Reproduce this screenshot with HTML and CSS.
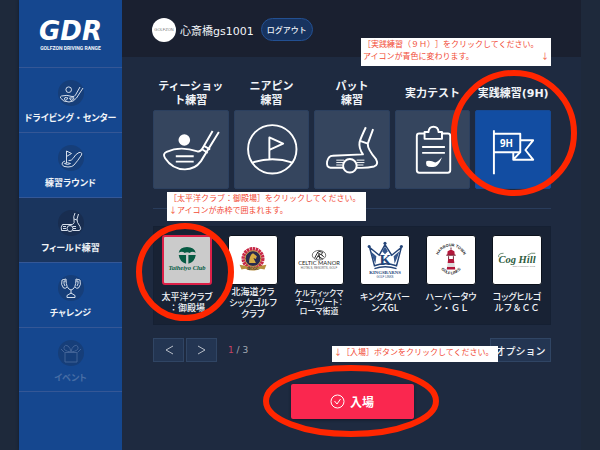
FILE: index.html
```html
<!DOCTYPE html>
<html lang="ja">
<head>
<meta charset="utf-8">
<title>GDR - GOLFZON DRIVING RANGE</title>
<link rel="stylesheet" href="styles.css">
</head>
<body>
<div class="app">
  <nav class="sidebar">
    <div class="brand">
      <span class="brand-name">GDR</span>
      <span class="brand-sub">GOLFZON DRIVING RANGE</span>
    </div>
    <a class="nav-item" href="#center">
      <svg class="nav-icon" viewBox="0 0 26 26"><circle class="disc" cx="13" cy="13" r="13"/><circle cx="10.700" cy="9.700" r="2.800"/><path d="M22 7L17.500 15Q16.500 17 14 16.500Q9 14.500 3.500 16Q2 16.500 2.500 18Q5 22 11 22Q15.500 22 18.500 18L25 8M7 17.500Q5 19.500 8 20.500L10 18ZM11.500 18L13 20.500Q16.500 19.500 16 17.800Z"/></svg>
      <span>ドライビング<span class="full">・</span>センター</span>
    </a>
    <a class="nav-item" href="#round">
      <svg class="nav-icon" viewBox="0 0 26 26"><circle class="disc" cx="13" cy="13" r="13"/><path d="M8.500 18V6L13.500 8.500L8.500 11.500M7 16Q3.500 17 4 19.500Q5 22 10 22Q14.500 22 16 20Q20 15.500 23.500 10Q24.500 7 21 7.500Q17.500 9 15 13.500Q13.500 16 10.500 15.500M6.500 18.500Q9.500 17 12.500 18.500Q9.500 20.500 6.500 18.500Z"/></svg>
      <span>練習ラウンド</span>
    </a>
    <a class="nav-item is-active" href="#field" aria-current="page">
      <svg class="nav-icon" viewBox="0 0 26 26"><circle class="disc" cx="13" cy="13" r="13"/><path d="M17 3Q15 7 16 10Q17 13 14.500 14.500H4.500Q2.500 17 3.500 20.500H9M15 20.500H21.500Q23.500 19 22 16.500Q18.500 12 19 9L20.500 4M16 9L19 10M5 16.500H8M5 18.500H8M15 16.500H18M15 18.500H18"/><circle cx="12" cy="18.500" r="3"/></svg>
      <span>フィールド練習</span>
    </a>
    <a class="nav-item" href="#challenge">
      <svg class="nav-icon" viewBox="0 0 26 26"><circle class="disc" cx="13" cy="13" r="13"/><path d="M8 4Q8 14 13 15Q18 14 18 4L22 5Q23.500 10 20.500 13Q18.500 14 17 12M8 4L4 5Q2.500 10 5.500 13Q7.500 14 9 12M8 6H6Q5.500 9 7 11M18 6H20Q20.500 9 19 11M13 15V19M13 18L9 20.500V22.500H17V20.500Z"/></svg>
      <span>チャレンジ</span>
    </a>
    <a class="nav-item is-disabled" href="#event" aria-disabled="true">
      <svg class="nav-icon" viewBox="0 0 26 26"><circle class="disc" cx="13" cy="13" r="13"/><path d="M7 12.500H19V22H7ZM3 9L6.500 12.500M23 9L19.500 12.500M13 12Q5 11 6 7Q7 4 10 6Q12.500 8 13 12Q13.500 8 16 6Q19 4 20 7Q21 11 13 12Z"/></svg>
      <span>イベント</span>
    </a>
  </nav>

  <main class="main">
    <header class="topbar">
      <span class="avatar">GOLFZON</span>
      <span class="user">心斎橋gs1001</span>
      <button class="logout" type="button">ログアウト</button>
    </header>

    <div class="content">
      <section class="modes">
        <button class="mode" type="button">
          <span class="mode-label"><span>ティーショッ<br>ト練習</span></span>
          <svg class="mode-icon" viewBox="0 0 76 79"><circle class="solid" cx="31.300" cy="29.700" r="6"/><path d="M60.500 20.500L50 38.500Q48 42 45 41.500Q27 35.500 13 42Q8.500 44 11.500 48.500Q19 60 32 60Q42.500 60 48.500 51.500L67 21.500M52 36L58 39.500M50 39.500L55.500 43M22.500 46.500H41M22.500 52H41"/></svg>
        </button>
        <button class="mode" type="button">
          <span class="mode-label"><span>ニアピン<br>練習</span></span>
          <svg class="mode-icon" viewBox="0 0 76 79"><circle cx="38.500" cy="39.300" r="25"/><path d="M35.500 50V27L49.700 33.500L35.500 40M18 53Q38.500 46 59.500 53"/></svg>
        </button>
        <button class="mode" type="button">
          <span class="mode-label"><span>パット<br>練習</span></span>
          <svg class="mode-icon" viewBox="0 0 76 79"><path d="M52.500 16.500Q47 28 46 32Q45 38 49.500 44.500L18 46Q14 46 12.500 52Q11.500 58 16 58.300H29M43 58.300Q53 59 61 57Q66 55 63 49.500Q54 39 54.500 33.500L60 18.500M46.500 30.500L54.500 33.500"/><path class="thin" d="M22 50.500H30M22 53H29M22 55.500H28M43 50.500H51M43 53H51M43 55.500H50"/><circle cx="36" cy="56.300" r="7"/></svg>
        </button>
        <button class="mode" type="button">
          <span class="mode-label"><span>実力テスト</span></span>
          <svg class="mode-icon" viewBox="0 0 76 79"><path d="M29.500 23H24Q21.500 23 21.500 25.500V61Q21.500 63.500 24 63.500H53.500Q56 63.500 56 61V25.500Q56 23 53.500 23H48M29.500 21.500H33.500Q34 16 38.700 16Q43.500 16 44 21.500H47.500V28.500H29.500ZM27 37H50.500M27 43H50.500"/><path class="solid" d="M31.500 51.500Q36 50.500 40.500 53Q43 52.500 47.500 47.500Q44.500 55.500 41 57Q34 58.500 31.500 56Q30.500 53.500 31.500 51.500Z"/></svg>
        </button>
        <button class="mode is-selected" type="button" aria-pressed="true">
          <span class="mode-label"><span>実践練習(9H)</span></span>
          <svg class="mode-icon" viewBox="0 0 76 79"><path d="M18.500 19.500V65M18.500 23.300H45.700V42.300H18.500M45.700 30H59L51 40L59 50H38.500V42.300M38.500 50L45.700 42.300"/><text class="flag-text" x="31.500" y="37">9H</text></svg>
          <svg class="ring ring-mode" viewBox="0 0 126 126" aria-hidden="true"><circle cx="63" cy="63" r="60"/></svg>
        </button>
        <p class="note note-mode"><span>［実践練習（９Ｈ）］をクリックしてください。</span><span class="note-row"><span>アイコンが青色に変わります。</span><span>↓</span></span></p>
      </section>

      <section class="courses">
        <p class="note note-course"><span>［太平洋クラブ：御殿場］をクリックしてください。</span><span>↓アイコンが赤枠で囲まれます。</span></p>
        <button class="course is-selected" type="button" aria-pressed="true">
          <svg class="course-logo" viewBox="0 0 50 50"><g fill="#075b43"><path d="M16 17Q17 11.500 25 11Q33 11.500 34.500 17Q30 15 28 17.500Q25 15.500 22.500 17.500Q20 15 16 17Z"/><path d="M16 19.500H24V29Q17 27 16 19.500ZM26.500 19.500H34.500Q33.500 27 26.500 29Z"/></g><text class="logo-taiheiyo" x="25" y="36">Taiheiyo Club</text></svg>
          <span class="caption">太平洋クラブ<br><span class="full">：御殿場</span></span>
          <svg class="ring ring-course" viewBox="0 0 98 98" aria-hidden="true"><circle cx="49" cy="49" r="46"/></svg>
        </button>
        <button class="course" type="button">
          <svg class="course-logo" viewBox="0 0 50 50"><circle cx="25" cy="23.500" r="10" fill="#e6b6b8" stroke="#c72745" stroke-width="4" stroke-dasharray="2.500 .6"/><circle cx="25" cy="23.500" r="8.200" fill="#292a4d" stroke="#c9a24a"/><path d="M21 28Q21 20 25 18L29 21L28 24L25.500 23L28 28Z" fill="#d8ad42"/><path d="M11 30L17 31Q25 34 33 31L39 30L37 35L33 34Q25 38 17 34L13 35Z" fill="#b98f3e"/><text class="logo-hcgc" x="25" y="35.500">HCGC</text></svg>
          <span class="caption">北海道クラ<br>シックゴルフ<br>クラブ</span>
        </button>
        <button class="course" type="button">
          <svg class="course-logo" viewBox="0 0 50 50"><ellipse cx="25" cy="20" rx="7" ry="5" fill="none" stroke="#444" stroke-width=".8"/><path d="M20.500 23L23 18L25 16L29 17L27.500 19L30 22M22 24L25 19L26 24M24 21L29 24M23 17L28 20" fill="none" stroke="#222" stroke-width="1"/><text class="logo-celtic" x="25" y="30.500">CELTIC MANOR</text><text class="logo-tiny" x="25" y="34">HOTELS, RESORTS, GOLF</text></svg>
          <span class="caption is-small">ケルティックマ<br>ナーリゾート：<br>ローマ街道</span>
        </button>
        <button class="course" type="button">
          <svg class="course-logo" viewBox="0 0 50 50"><path d="M9 12L14 31Q25 27 37 31L42 12L32 20L25 9L19 20ZM14 34Q25 30 37 34" fill="none" stroke="#244477" stroke-width="1.500"/><path d="M10 16L16 21L15 29L12 22ZM40 16L34 21L35 29L38 22ZM22 16L25 11L28 16L25 19Z" fill="#35578c"/><g fill="#244477"><circle cx="8.500" cy="11" r="1.600"/><circle cx="25" cy="7.500" r="1.600"/><circle cx="42" cy="11" r="1.600"/></g><text class="logo-k" x="25.500" y="30">K</text><text class="logo-kings" x="25" y="40">KINGSBARNS</text><text class="logo-tiny logo-blue" x="25" y="44">GOLF LINKS</text></svg>
          <span class="caption">キングスバー<br>ンズGL</span>
        </button>
        <button class="course" type="button">
          <svg class="course-logo" viewBox="0 0 50 50"><defs><path id="arc-top" d="M11.500 21A14 14 0 0 1 38.500 21"/><path id="arc-low" d="M14 34Q25 46 36 34"/></defs><text class="logo-arc"><textPath href="#arc-top" startOffset="50%">HARBOUR TOWN</textPath></text><text class="logo-arc"><textPath href="#arc-low" startOffset="50%">GOLF LINKS</textPath></text><path d="M21 20L21.500 16L25 14L28.500 16L29 20ZM22 24H28L28.500 28H21.500ZM21 32H29L29.500 35H20.500Z" fill="#b2173b"/><path d="M20 20H30M22.500 21V24M27.500 21V24M25 12V14" stroke="#6e1d31" fill="none"/><path d="M21.500 28H28.500L29 32H21Z" fill="#ddd"/></svg>
          <span class="caption">ハーバータウ<br><span class="full">ン・ＧＬ</span></span>
        </button>
        <button class="course" type="button">
          <svg class="course-logo" viewBox="0 0 50 50"><text class="logo-cog" x="25" y="28">Cog Hill</text><path d="M6 22Q5 18 11 18M36 20Q40 17 44 18" fill="none" stroke="#2d5c3d" stroke-width=".7"/><text class="logo-mini" x="32" y="32">GOLF &amp; COUNTRY CLUB</text></svg>
          <span class="caption">コッグヒルゴ<br><span class="full">ルフ＆ＣＣ</span></span>
        </button>
      </section>

      <div class="pager">
        <button class="page-button" type="button" aria-label="前へ"><svg viewBox="0 0 10 10"><path d="M9 1L2 5L9 9"/></svg></button>
        <button class="page-button" type="button" aria-label="次へ"><svg viewBox="0 0 10 10"><path d="M1 1L8 5L1 9"/></svg></button>
        <span class="page-count"><b>1</b> / 3</span>
        <button class="option" type="button">オプション</button>
        <p class="note note-enter"><span>↓［入場］ボタンをクリックしてください。</span></p>
      </div>

      <div class="actions">
        <button class="enter" type="button">
          <svg class="check" viewBox="0 0 15 15"><circle cx="7.500" cy="7.500" r="6.500"/><path d="M4.500 7L7 10L10.500 5"/></svg>
          <span>入場</span>
          <svg class="ring ring-enter" viewBox="0 0 176 72" aria-hidden="true"><ellipse cx="88" cy="36" rx="85" ry="33"/></svg>
        </button>
      </div>
    </div>
  </main>
</div>
</body>
</html>
```
FILE: styles.css
```css
* { box-sizing: border-box; }

body {
  margin: 0;
  background: #1e293b;
  color: #f1f4f8;
  font-family: "DejaVu Sans", "Noto Sans CJK JP", sans-serif;
}

button {
  margin: 0;
  padding: 0;
  border: 0;
  background: none;
  color: inherit;
  font: inherit;
  cursor: pointer;
}

p { margin: 0; }

.app {
  display: flex;
  min-height: 100vh;
  padding: 0 19px;
}

/* Sidebar */
.sidebar {
  flex: 0 0 103px;
  background: #15478f;
  box-shadow: 0 0 3px #10192a;
}

.brand {
  display: flex;
  flex-direction: column;
  align-items: center;
  height: 67px;
  padding-top: 17px;
}

.brand-name {
  font-size: 26px;
  font-style: italic;
  font-weight: bold;
  line-height: 28px;
  color: #fff;
}

.brand-sub {
  font-family: Roboto, sans-serif;
  font-size: 5px;
  font-weight: 700;
  line-height: 6px;
  white-space: nowrap;
}

.nav-item {
  display: flex;
  flex-direction: column;
  align-items: center;
  gap: 6px;
  height: 65px;
  padding-top: 12px;
  border-top: 1px solid #345796;
  color: #f1f4f8;
  font-family: "Noto Sans CJK JP", sans-serif;
  font-size: 9px;
  font-weight: 700;
  font-feature-settings: "palt";
  line-height: 12px;
  text-decoration: none;
  white-space: nowrap;
}

.nav-item:last-child {
  border-bottom: 1px solid #345796;
}

.nav-item.is-active { background: #1a355e; }

.nav-item.is-disabled { color: #476da5; }

.nav-icon {
  width: 26px;
  height: 26px;
  fill: none;
  stroke: #d5deeb;
  stroke-width: 1;
  stroke-linejoin: round;
}

.nav-icon .disc {
  fill: #163e79;
  stroke: none;
}

.is-active .disc { fill: #182d50; }

.is-disabled .nav-icon,
.nav-item.is-disabled .nav-icon { stroke: #416296; }

.full {
  font-feature-settings: normal;
  text-spacing-trim: space-all;
}

/* Top bar */
.main {
  flex: 1;
  min-width: 0;
  background: #1e2a40;
}

.topbar {
  display: flex;
  align-items: center;
  height: 57px;
  padding: 2px 30px 0;
  background: #1a2030;
}

.avatar {
  display: flex;
  align-items: center;
  justify-content: center;
  width: 24px;
  height: 24px;
  border-radius: 50%;
  background: #fff;
  color: #777;
  font-family: "Liberation Sans", sans-serif;
  font-size: 4px;
}

.user {
  margin-left: 4px;
  font-size: 11px;
}

.logout {
  width: 52px;
  height: 23px;
  margin-left: 7px;
  border: 1px solid #235092;
  border-radius: 12px;
  background: #17335f;
  font-size: 8px;
  font-weight: 500;
}

.content { padding: 22px 30px 0 31px; }

/* Practice modes */
.modes {
  position: relative;
  display: grid;
  grid-template-columns: repeat(5, minmax(0, 1fr));
  gap: 5px;
  padding-bottom: 19px;
  border-bottom: 1px solid #293c5b;
}

.mode {
  position: relative;
  display: flex;
  flex-direction: column;
  gap: 2px;
  font-size: 11px;
  font-weight: bold;
  line-height: 14px;
}

.mode-label {
  display: flex;
  align-items: center;
  justify-content: center;
  width: 100%;
  height: 29px;
  text-align: center;
  white-space: nowrap;
}

.mode-icon {
  width: 100%;
  height: 79px;
  border: 1px solid #2c405f;
  border-radius: 2px;
  background: #35455e;
  fill: none;
  stroke: #fff;
  stroke-width: 2;
  stroke-linejoin: round;
}

.mode-icon .solid { fill: #fff; stroke: none; }

.mode-icon .thin { stroke-width: 1; }

.mode.is-selected .mode-icon {
  border-color: #164994;
  background: #124da2;
}

.flag-text {
  fill: #fff;
  stroke: none;
  font-family: "Noto Sans", sans-serif;
  font-size: 10px;
  text-anchor: middle;
}

/* Courses */
.courses {
  position: relative;
  display: grid;
  grid-template-columns: repeat(6, minmax(0, 1fr));
  height: 99px;
  margin-top: 17px;
  padding: 8px 0 0;
  border: 1px solid #152033;
  background: #182234;
}

.course {
  position: relative;
  display: flex;
  flex-direction: column;
  align-items: center;
}

.course-logo {
  width: 50px;
  height: 50px;
  flex: none;
  border: 1px solid #0c121c;
  border-radius: 3px;
  background: #fff;
}

.course.is-selected .course-logo {
  border: 2px solid #dc2048;
  background: #cbcbcb;
}

.caption {
  display: flow-root;
  height: 34px;
  padding-top: 6px;
  font-family: "Noto Sans CJK JP", sans-serif;
  font-size: 9px;
  font-weight: 500;
  font-feature-settings: "palt";
  line-height: 11px;
  text-align: center;
  white-space: nowrap;
}

.caption:has(br + br),
.caption:has(br ~ br) { padding-top: 1px; }

.caption.is-small {
  padding-top: 3px;
  font-size: 8px;
  line-height: 9px;
}

.course-logo text { text-anchor: middle; }

.logo-taiheiyo {
  fill: #075b43;
  font: italic bold 7px "Liberation Serif", serif;
}

.logo-hcgc { fill: #2b2630; font: bold 4px "Liberation Serif", serif; }

.logo-celtic { fill: #222; font: 6px Lato, sans-serif; }

.logo-tiny { fill: #555; font: 3px "Liberation Sans", sans-serif; }

.logo-mini { fill: #777; font: 2px "Liberation Sans", sans-serif; }

.logo-k { fill: #244477; font: bold 16px "Liberation Serif", serif; }

.logo-kings { fill: #244477; font: bold 5px "Liberation Serif", serif; }

.logo-blue { fill: #244477; }

.logo-arc { fill: #222; font: bold 4px "Liberation Sans", sans-serif; }

.logo-cog {
  fill: #2d5c3d;
  font: italic bold 11px "Liberation Serif", serif;
}

/* Pager */
.pager {
  position: relative;
  display: flex;
  align-items: center;
  gap: 2px;
  margin-top: 13px;
}

.page-button,
.option {
  display: flex;
  align-items: center;
  justify-content: center;
  width: 31px;
  height: 24px;
  border: 1px solid #304564;
  background: #233552;
}

.page-button svg {
  width: 10px;
  height: 10px;
  fill: none;
  stroke: #b8bec8;
}

.page-count {
  margin-left: 9px;
  color: #a5aab4;
  font-size: 9px;
}

.page-count b {
  color: #c54263;
  font-weight: normal;
}

.option {
  width: 61px;
  margin-left: auto;
  font-size: 10px;
  font-weight: 500;
}

/* Enter */
.actions {
  display: flex;
  justify-content: center;
  margin-top: 22px;
}

.enter {
  position: relative;
  display: flex;
  align-items: center;
  justify-content: center;
  gap: 5px;
  width: 123px;
  height: 35px;
  border-radius: 2px;
  background: #fa274f;
  box-shadow: 0 1px 3px #121a29;
  color: #fff;
  font-size: 12px;
  font-weight: bold;
}

.check {
  width: 15px;
  height: 15px;
  fill: none;
  stroke: #fff;
}

/* Guide notes and rings laid over the screen */
.note {
  position: absolute;
  z-index: 2;
  display: grid;
  align-content: start;
  padding: 0 2px;
  background: #fff;
  color: #f24a35;
  font-family: "Noto Sans CJK JP", sans-serif;
  font-size: 8px;
  line-height: 12px;
  text-spacing-trim: space-all;
  white-space: nowrap;
}

.note-row {
  display: flex;
  justify-content: space-between;
}

.note-mode {
  top: -41px;
  right: 0;
  width: 190px;
  height: 28px;
}

.note-course {
  top: -35px;
  left: 13px;
  width: 199px;
  height: 29px;
}

.note-enter {
  top: 8px;
  right: 53px;
  width: 166px;
  height: 16px;
}

.ring {
  position: absolute;
  z-index: 3;
  fill: none;
  stroke: #ff2600;
  stroke-width: 6;
  pointer-events: none;
}

.ring-mode {
  top: -9px;
  left: -24px;
  width: 126px;
  height: 126px;
}

.ring-course {
  top: -12px;
  left: -18px;
  width: 98px;
  height: 98px;
}

.ring-enter {
  top: -19px;
  left: -28px;
  width: 176px;
  height: 72px;
}
```
